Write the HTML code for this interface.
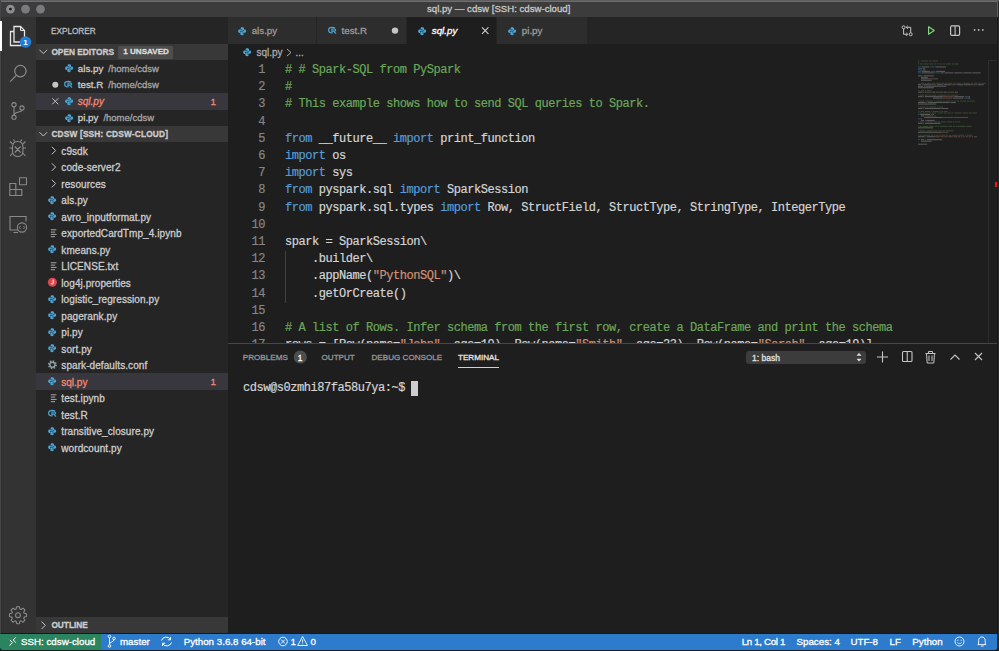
<!DOCTYPE html>
<html><head><meta charset="utf-8">
<style>
*{margin:0;padding:0;box-sizing:border-box}
html,body{width:999px;height:651px;overflow:hidden;background:#1e1e1e;font-family:"Liberation Sans",sans-serif;}
.a{position:absolute}
.t{position:absolute;white-space:nowrap;font-size:9.75px;color:#cccccc;-webkit-text-stroke:0.3px}
.code{position:absolute;font-family:"Liberation Mono",monospace;font-size:12px;letter-spacing:-0.45px;line-height:17.25px;white-space:pre;color:#d4d4d4;-webkit-text-stroke:0.2px}
.cm{color:#6aa65a}.kw{color:#569cd6}.st{color:#ce9178}
svg{position:absolute;overflow:visible}
</style></head><body>

<div class="a" style="left:0;top:0;width:999px;height:17px;background:#3c3c3c"></div>
<div class="a" style="left:0;top:0;width:999px;height:1px;background:#5e5e5e"></div>
<div class="a" style="left:0;top:17px;width:36px;height:617px;background:#333333"></div>
<div class="a" style="left:36px;top:17px;width:192px;height:617px;background:#252526"></div>
<div class="a" style="left:228px;top:17px;width:771px;height:26.5px;background:#252526"></div>
<div class="a" style="left:228px;top:43.5px;width:771px;height:299.5px;background:#1e1e1e"></div>
<div class="a" style="left:228px;top:343px;width:771px;height:291px;background:#1e1e1e;border-top:1px solid #474747"></div>
<div class="a" style="left:0;top:0;width:999px;height:651px;background:transparent"></div>
<div class="a" style="left:0;top:649.5px;width:999px;height:1.5px;background:#1c1c1c"></div>
<div class="a" style="left:0;top:634px;width:998px;height:15.5px;background:#2c7bcd;border-radius:0 0 4px 4px"></div>
<div class="a" style="left:0;top:634px;width:101px;height:15.5px;background:#2a8460;border-radius:0 0 0 4px"></div>
<svg style="left:0;top:0" width="60" height="17"><circle cx="10.45" cy="9.1" r="4.4" fill="#8c8c91"/><circle cx="10.45" cy="9.1" r="1.4" fill="#1a1a1a"/><circle cx="25.5" cy="9.1" r="4.4" fill="#7a7a7e"/><circle cx="40.5" cy="9.1" r="4.4" fill="#7a7a7e"/></svg>
<div class="t" style="left:427px;top:0.7999999999999989px;line-height:16px;font-size:9.65px;color:#c8c8c8;">sql.py — cdsw [SSH: cdsw-cloud]</div>
<svg style="left:0;top:0" width="36" height="634"><path d="M14 26.5H20.5L24.5 30.5V42H14Z" fill="none" stroke="#e6e6e6" stroke-width="1.3"/><path d="M20.5 26.5V30.5H24.5" fill="none" stroke="#e6e6e6" stroke-width="1"/><path d="M14 31.5H10.5V45.5H21V42" fill="none" stroke="#e6e6e6" stroke-width="1.3"/><circle cx="25.5" cy="42" r="5.8" fill="#1f7fd8"/><text x="25.5" y="45" font-size="8" font-weight="bold" fill="#fff" text-anchor="middle" font-family="Liberation Sans">1</text><circle cx="20.4" cy="71.1" r="5.7" fill="none" stroke="#8a8a8a" stroke-width="1.2"/><path d="M16.3 75.4L10.2 81.6" stroke="#8a8a8a" stroke-width="1.3"/><circle cx="14" cy="104.7" r="2.1" fill="none" stroke="#8a8a8a" stroke-width="1.1"/><circle cx="22" cy="108" r="2.1" fill="none" stroke="#8a8a8a" stroke-width="1.1"/><circle cx="14" cy="117.2" r="2.1" fill="none" stroke="#8a8a8a" stroke-width="1.1"/><path d="M14 106.8V115.1M22 110.1C22 112.5 15 111.5 14 114.5" fill="none" stroke="#8a8a8a" stroke-width="1.1"/><path d="M12.5 147C12.5 143.5 14.8 141.5 17.7 141.5C20.6 141.5 22.9 143.5 22.9 147V151.5C22.9 154.5 20.6 156.5 17.7 156.5C14.8 156.5 12.5 154.5 12.5 151.5Z" fill="none" stroke="#8a8a8a" stroke-width="1.1"/><path d="M14.8 146.5L20.6 152.5M20.6 146.5L14.8 152.5M12.5 148H9.5M22.9 148H26M12.5 144L10 141.5M22.9 144L25.4 141.5M12.5 153L10 156M22.9 153L25.4 156M15 141.8L13.5 139.5M20.4 141.8L21.9 139.5" fill="none" stroke="#8a8a8a" stroke-width="1.1"/><path d="M9.8 183.5H15.8V189.5H21.8V195.5H9.8Z M15.8 189.5H9.8 M15.8 189.5V195.5" fill="none" stroke="#8a8a8a" stroke-width="1.1"/><rect x="19.5" y="177.8" width="7" height="7" rx="0.5" fill="none" stroke="#8a8a8a" stroke-width="1.1"/><path d="M18 230H10V216.5H26V221.5" fill="none" stroke="#8a8a8a" stroke-width="1.1"/><path d="M13.5 232.5H18" stroke="#8a8a8a" stroke-width="1.1"/><circle cx="22" cy="227.5" r="4.6" fill="#333" stroke="#8a8a8a" stroke-width="1.1"/><path d="M20.5 226L19.5 227.5L20.5 229M23.5 226L24.5 227.5L23.5 229" fill="none" stroke="#8a8a8a" stroke-width="0.9"/><g transform="translate(18 615.2)"><path d="" /></g></svg>
<svg style="left:0;top:0" width="36" height="651"><path d="M16.63 606.71L19.37 606.71L19.89 609.09L20.99 609.54L23.03 608.23L24.97 610.17L23.66 612.21L24.11 613.31L26.49 613.83L26.49 616.57L24.11 617.09L23.66 618.19L24.97 620.23L23.03 622.17L20.99 620.86L19.89 621.31L19.37 623.69L16.63 623.69L16.11 621.31L15.01 620.86L12.97 622.17L11.03 620.23L12.34 618.19L11.89 617.09L9.51 616.57L9.51 613.83L11.89 613.31L12.34 612.21L11.03 610.17L12.97 608.23L15.01 609.54L16.11 609.09Z" fill="none" stroke="#8a8a8a" stroke-width="1.1" stroke-linejoin="round"/><circle cx="18" cy="615.2" r="2.4" fill="none" stroke="#8a8a8a" stroke-width="1.1"/></svg>
<div class="t" style="left:51px;top:23.900000000000002px;line-height:16px;font-size:8.2px;color:#bbbbbb;">EXPLORER</div>
<div class="a" style="left:36px;top:43.5px;width:192px;height:16.5px;background:#383838"></div>
<svg style="left:0;top:0" width="1" height="1"><path d="M39.5 49.8L43.3 53.6L47.1 49.8" fill="none" stroke="#c5c5c5" stroke-width="1"/></svg>
<div class="t" style="left:51.4px;top:43.7px;line-height:16px;font-size:8.3px;color:#cccccc;font-weight:bold;letter-spacing:0px">OPEN EDITORS</div>
<div class="a" style="left:118px;top:45.5px;width:55px;height:13px;background:#4d4d4d;border-radius:1px"></div>
<div class="t" style="left:123.2px;top:43.7px;line-height:16px;font-size:8.1px;color:#dddddd;font-weight:bold">1 UNSAVED</div>
<svg style="left:64.85px;top:64.1px" width="8.3" height="8.3" viewBox="0 0 10 10"><path d="M5 0.2C3.2 0.2 3.2 1 3.2 1.5V2.5H5.3V3H1.8C0.8 3 0.2 3.8 0.2 5.1C0.2 6.5 0.9 7.1 1.8 7.1H2.6V6C2.6 5.2 3.2 4.6 4 4.6H6C6.7 4.6 7.2 4.1 7.2 3.4V1.5C7.2 0.8 6.5 0.2 5 0.2Z" fill="#4ba5d6"/><path d="M5 9.8C6.8 9.8 6.8 9 6.8 8.5V7.5H4.7V7H8.2C9.2 7 9.8 6.2 9.8 4.9C9.8 3.5 9.1 2.9 8.2 2.9H7.4V4C7.4 4.8 6.8 5.4 6 5.4H4C3.3 5.4 2.8 5.9 2.8 6.6V8.5C2.8 9.2 3.5 9.8 5 9.8Z" fill="#4ba5d6"/></svg>
<div class="t" style="left:77.8px;top:60.849999999999994px;line-height:16px;font-size:9.75px;color:#cccccc;">als.py<span style="font-size:9.5px;color:#a6a6a6;margin-left:5px">/home/cdsw</span></div>
<svg style="left:0;top:0" width="1" height="1"><circle cx="55.3" cy="84.75" r="3" fill="#c5c5c5"/></svg>
<svg style="left:64.4px;top:80.85px" width="9.4" height="7" viewBox="0 0 10 8" preserveAspectRatio="none"><path d="M7.6 1.6C6.9 0.9 5.6 0.5 4.5 0.5C2.3 0.5 0.7 1.8 0.7 3.6C0.7 5.3 2 6.4 3.6 6.7" fill="none" stroke="#4ba5d6" stroke-width="1.3"/><path d="M4.2 7.4V2.3H6.6C7.6 2.3 8.1 2.8 8.1 3.5C8.1 4.2 7.6 4.7 6.6 4.7H4.2M6.1 4.7L8.6 7.6" fill="none" stroke="#4ba5d6" stroke-width="1.2"/></svg>
<div class="t" style="left:77.8px;top:77.35px;line-height:16px;font-size:9.75px;color:#cccccc;">test.R<span style="font-size:9.5px;color:#a6a6a6;margin-left:5px">/home/cdsw</span></div>
<div class="a" style="left:36px;top:93.0px;width:192px;height:16.5px;background:#37373d"></div>
<svg style="left:0;top:0" width="1" height="1"><path d="M52.3 98.25L58.3 104.25M58.3 98.25L52.3 104.25" stroke="#c5c5c5" stroke-width="1"/></svg>
<svg style="left:64.85px;top:97.1px" width="8.3" height="8.3" viewBox="0 0 10 10"><path d="M5 0.2C3.2 0.2 3.2 1 3.2 1.5V2.5H5.3V3H1.8C0.8 3 0.2 3.8 0.2 5.1C0.2 6.5 0.9 7.1 1.8 7.1H2.6V6C2.6 5.2 3.2 4.6 4 4.6H6C6.7 4.6 7.2 4.1 7.2 3.4V1.5C7.2 0.8 6.5 0.2 5 0.2Z" fill="#4ba5d6"/><path d="M5 9.8C6.8 9.8 6.8 9 6.8 8.5V7.5H4.7V7H8.2C9.2 7 9.8 6.2 9.8 4.9C9.8 3.5 9.1 2.9 8.2 2.9H7.4V4C7.4 4.8 6.8 5.4 6 5.4H4C3.3 5.4 2.8 5.9 2.8 6.6V8.5C2.8 9.2 3.5 9.8 5 9.8Z" fill="#4ba5d6"/></svg>
<div class="t" style="left:77.8px;top:93.85px;line-height:16px;font-size:10px;color:#f48771;font-style:italic">sql.py</div>
<div class="t" style="left:210.5px;top:93.85px;line-height:16px;font-size:9.75px;color:#f48771;">1</div>
<svg style="left:64.85px;top:113.6px" width="8.3" height="8.3" viewBox="0 0 10 10"><path d="M5 0.2C3.2 0.2 3.2 1 3.2 1.5V2.5H5.3V3H1.8C0.8 3 0.2 3.8 0.2 5.1C0.2 6.5 0.9 7.1 1.8 7.1H2.6V6C2.6 5.2 3.2 4.6 4 4.6H6C6.7 4.6 7.2 4.1 7.2 3.4V1.5C7.2 0.8 6.5 0.2 5 0.2Z" fill="#4ba5d6"/><path d="M5 9.8C6.8 9.8 6.8 9 6.8 8.5V7.5H4.7V7H8.2C9.2 7 9.8 6.2 9.8 4.9C9.8 3.5 9.1 2.9 8.2 2.9H7.4V4C7.4 4.8 6.8 5.4 6 5.4H4C3.3 5.4 2.8 5.9 2.8 6.6V8.5C2.8 9.2 3.5 9.8 5 9.8Z" fill="#4ba5d6"/></svg>
<div class="t" style="left:77.8px;top:110.35px;line-height:16px;font-size:9.75px;color:#cccccc;">pi.py<span style="font-size:9.5px;color:#a6a6a6;margin-left:5px">/home/cdsw</span></div>
<div class="a" style="left:36px;top:125.9px;width:192px;height:16.5px;background:#383838"></div>
<svg style="left:0;top:0" width="1" height="1"><path d="M39.5 132.20000000000002L43.3 136.0L47.1 132.20000000000002" fill="none" stroke="#c5c5c5" stroke-width="1"/></svg>
<div class="t" style="left:51.4px;top:126.1px;line-height:16px;font-size:8.3px;color:#cccccc;font-weight:bold;letter-spacing:0.18px">CDSW [SSH: CDSW-CLOUD]</div>
<svg style="left:0;top:0" width="1" height="1"><path d="M51.8 146.75L55.6 150.55L51.8 154.35000000000002" fill="none" stroke="#c5c5c5" stroke-width="1"/></svg>
<div class="t" style="left:61.3px;top:143.75px;line-height:16px;font-size:10px;color:#cccccc;letter-spacing:0.08px">c9sdk</div>
<svg style="left:0;top:0" width="1" height="1"><path d="M51.8 163.25L55.6 167.05L51.8 170.85000000000002" fill="none" stroke="#c5c5c5" stroke-width="1"/></svg>
<div class="t" style="left:61.3px;top:160.25px;line-height:16px;font-size:10px;color:#cccccc;letter-spacing:0.08px">code-server2</div>
<svg style="left:0;top:0" width="1" height="1"><path d="M51.8 179.75L55.6 183.55L51.8 187.35000000000002" fill="none" stroke="#c5c5c5" stroke-width="1"/></svg>
<div class="t" style="left:61.3px;top:176.75px;line-height:16px;font-size:10px;color:#cccccc;letter-spacing:0.08px">resources</div>
<svg style="left:48.25px;top:195.9px" width="8.3" height="8.3" viewBox="0 0 10 10"><path d="M5 0.2C3.2 0.2 3.2 1 3.2 1.5V2.5H5.3V3H1.8C0.8 3 0.2 3.8 0.2 5.1C0.2 6.5 0.9 7.1 1.8 7.1H2.6V6C2.6 5.2 3.2 4.6 4 4.6H6C6.7 4.6 7.2 4.1 7.2 3.4V1.5C7.2 0.8 6.5 0.2 5 0.2Z" fill="#4ba5d6"/><path d="M5 9.8C6.8 9.8 6.8 9 6.8 8.5V7.5H4.7V7H8.2C9.2 7 9.8 6.2 9.8 4.9C9.8 3.5 9.1 2.9 8.2 2.9H7.4V4C7.4 4.8 6.8 5.4 6 5.4H4C3.3 5.4 2.8 5.9 2.8 6.6V8.5C2.8 9.2 3.5 9.8 5 9.8Z" fill="#4ba5d6"/></svg>
<div class="t" style="left:61.3px;top:193.25px;line-height:16px;font-size:10px;color:#cccccc;letter-spacing:0.08px">als.py</div>
<svg style="left:48.25px;top:212.4px" width="8.3" height="8.3" viewBox="0 0 10 10"><path d="M5 0.2C3.2 0.2 3.2 1 3.2 1.5V2.5H5.3V3H1.8C0.8 3 0.2 3.8 0.2 5.1C0.2 6.5 0.9 7.1 1.8 7.1H2.6V6C2.6 5.2 3.2 4.6 4 4.6H6C6.7 4.6 7.2 4.1 7.2 3.4V1.5C7.2 0.8 6.5 0.2 5 0.2Z" fill="#4ba5d6"/><path d="M5 9.8C6.8 9.8 6.8 9 6.8 8.5V7.5H4.7V7H8.2C9.2 7 9.8 6.2 9.8 4.9C9.8 3.5 9.1 2.9 8.2 2.9H7.4V4C7.4 4.8 6.8 5.4 6 5.4H4C3.3 5.4 2.8 5.9 2.8 6.6V8.5C2.8 9.2 3.5 9.8 5 9.8Z" fill="#4ba5d6"/></svg>
<div class="t" style="left:61.3px;top:209.75px;line-height:16px;font-size:10px;color:#cccccc;letter-spacing:0.08px">avro_inputformat.py</div>
<svg style="left:47px;top:228.05px" width="10" height="10" viewBox="0 0 10 10"><path d="M3.8 1.8H9.4M3.8 4.1H8.2M3.8 6.4H9.6M3.8 8.7H8" stroke="#a8a8a8" stroke-width="1"/></svg>
<div class="t" style="left:61.3px;top:226.25px;line-height:16px;font-size:10px;color:#cccccc;letter-spacing:0.08px">exportedCardTmp_4.ipynb</div>
<svg style="left:48.25px;top:245.4px" width="8.3" height="8.3" viewBox="0 0 10 10"><path d="M5 0.2C3.2 0.2 3.2 1 3.2 1.5V2.5H5.3V3H1.8C0.8 3 0.2 3.8 0.2 5.1C0.2 6.5 0.9 7.1 1.8 7.1H2.6V6C2.6 5.2 3.2 4.6 4 4.6H6C6.7 4.6 7.2 4.1 7.2 3.4V1.5C7.2 0.8 6.5 0.2 5 0.2Z" fill="#4ba5d6"/><path d="M5 9.8C6.8 9.8 6.8 9 6.8 8.5V7.5H4.7V7H8.2C9.2 7 9.8 6.2 9.8 4.9C9.8 3.5 9.1 2.9 8.2 2.9H7.4V4C7.4 4.8 6.8 5.4 6 5.4H4C3.3 5.4 2.8 5.9 2.8 6.6V8.5C2.8 9.2 3.5 9.8 5 9.8Z" fill="#4ba5d6"/></svg>
<div class="t" style="left:61.3px;top:242.75px;line-height:16px;font-size:10px;color:#cccccc;letter-spacing:0.08px">kmeans.py</div>
<svg style="left:47px;top:261.05px" width="10" height="10" viewBox="0 0 10 10"><path d="M3.8 1.8H9.4M3.8 4.1H8.2M3.8 6.4H9.6M3.8 8.7H8" stroke="#a8a8a8" stroke-width="1"/></svg>
<div class="t" style="left:61.3px;top:259.25000000000006px;line-height:16px;font-size:10px;color:#cccccc;letter-spacing:0.08px">LICENSE.txt</div>
<svg style="left:0;top:0" width="1" height="1"><circle cx="52.4" cy="282.25" r="4.5" fill="#e0464f"/><path d="M53.2 279.65000000000003V283.25C53.2 284.25 51.4 284.25 51 283.25" fill="none" stroke="#fff" stroke-width="1"/></svg>
<div class="t" style="left:61.3px;top:275.75000000000006px;line-height:16px;font-size:10px;color:#cccccc;letter-spacing:0.08px">log4j.properties</div>
<svg style="left:48.25px;top:294.90000000000003px" width="8.3" height="8.3" viewBox="0 0 10 10"><path d="M5 0.2C3.2 0.2 3.2 1 3.2 1.5V2.5H5.3V3H1.8C0.8 3 0.2 3.8 0.2 5.1C0.2 6.5 0.9 7.1 1.8 7.1H2.6V6C2.6 5.2 3.2 4.6 4 4.6H6C6.7 4.6 7.2 4.1 7.2 3.4V1.5C7.2 0.8 6.5 0.2 5 0.2Z" fill="#4ba5d6"/><path d="M5 9.8C6.8 9.8 6.8 9 6.8 8.5V7.5H4.7V7H8.2C9.2 7 9.8 6.2 9.8 4.9C9.8 3.5 9.1 2.9 8.2 2.9H7.4V4C7.4 4.8 6.8 5.4 6 5.4H4C3.3 5.4 2.8 5.9 2.8 6.6V8.5C2.8 9.2 3.5 9.8 5 9.8Z" fill="#4ba5d6"/></svg>
<div class="t" style="left:61.3px;top:292.25000000000006px;line-height:16px;font-size:10px;color:#cccccc;letter-spacing:0.08px">logistic_regression.py</div>
<svg style="left:48.25px;top:311.40000000000003px" width="8.3" height="8.3" viewBox="0 0 10 10"><path d="M5 0.2C3.2 0.2 3.2 1 3.2 1.5V2.5H5.3V3H1.8C0.8 3 0.2 3.8 0.2 5.1C0.2 6.5 0.9 7.1 1.8 7.1H2.6V6C2.6 5.2 3.2 4.6 4 4.6H6C6.7 4.6 7.2 4.1 7.2 3.4V1.5C7.2 0.8 6.5 0.2 5 0.2Z" fill="#4ba5d6"/><path d="M5 9.8C6.8 9.8 6.8 9 6.8 8.5V7.5H4.7V7H8.2C9.2 7 9.8 6.2 9.8 4.9C9.8 3.5 9.1 2.9 8.2 2.9H7.4V4C7.4 4.8 6.8 5.4 6 5.4H4C3.3 5.4 2.8 5.9 2.8 6.6V8.5C2.8 9.2 3.5 9.8 5 9.8Z" fill="#4ba5d6"/></svg>
<div class="t" style="left:61.3px;top:308.75000000000006px;line-height:16px;font-size:10px;color:#cccccc;letter-spacing:0.08px">pagerank.py</div>
<svg style="left:48.25px;top:327.90000000000003px" width="8.3" height="8.3" viewBox="0 0 10 10"><path d="M5 0.2C3.2 0.2 3.2 1 3.2 1.5V2.5H5.3V3H1.8C0.8 3 0.2 3.8 0.2 5.1C0.2 6.5 0.9 7.1 1.8 7.1H2.6V6C2.6 5.2 3.2 4.6 4 4.6H6C6.7 4.6 7.2 4.1 7.2 3.4V1.5C7.2 0.8 6.5 0.2 5 0.2Z" fill="#4ba5d6"/><path d="M5 9.8C6.8 9.8 6.8 9 6.8 8.5V7.5H4.7V7H8.2C9.2 7 9.8 6.2 9.8 4.9C9.8 3.5 9.1 2.9 8.2 2.9H7.4V4C7.4 4.8 6.8 5.4 6 5.4H4C3.3 5.4 2.8 5.9 2.8 6.6V8.5C2.8 9.2 3.5 9.8 5 9.8Z" fill="#4ba5d6"/></svg>
<div class="t" style="left:61.3px;top:325.25000000000006px;line-height:16px;font-size:10px;color:#cccccc;letter-spacing:0.08px">pi.py</div>
<svg style="left:48.25px;top:344.40000000000003px" width="8.3" height="8.3" viewBox="0 0 10 10"><path d="M5 0.2C3.2 0.2 3.2 1 3.2 1.5V2.5H5.3V3H1.8C0.8 3 0.2 3.8 0.2 5.1C0.2 6.5 0.9 7.1 1.8 7.1H2.6V6C2.6 5.2 3.2 4.6 4 4.6H6C6.7 4.6 7.2 4.1 7.2 3.4V1.5C7.2 0.8 6.5 0.2 5 0.2Z" fill="#4ba5d6"/><path d="M5 9.8C6.8 9.8 6.8 9 6.8 8.5V7.5H4.7V7H8.2C9.2 7 9.8 6.2 9.8 4.9C9.8 3.5 9.1 2.9 8.2 2.9H7.4V4C7.4 4.8 6.8 5.4 6 5.4H4C3.3 5.4 2.8 5.9 2.8 6.6V8.5C2.8 9.2 3.5 9.8 5 9.8Z" fill="#4ba5d6"/></svg>
<div class="t" style="left:61.3px;top:341.75000000000006px;line-height:16px;font-size:10px;color:#cccccc;letter-spacing:0.08px">sort.py</div>
<svg style="left:0;top:0" width="1" height="1"><circle cx="52.4" cy="364.7" r="3.5" fill="none" stroke="#8d9ca0" stroke-width="2" stroke-dasharray="1.37 1.37"/><circle cx="52.4" cy="364.7" r="2.5" fill="none" stroke="#8d9ca0" stroke-width="1.4"/></svg>
<div class="t" style="left:61.3px;top:358.25000000000006px;line-height:16px;font-size:10px;color:#cccccc;letter-spacing:0.08px">spark-defaults.conf</div>
<div class="a" style="left:36px;top:373.3px;width:192px;height:16.5px;background:#37373d"></div>
<svg style="left:48.25px;top:377.40000000000003px" width="8.3" height="8.3" viewBox="0 0 10 10"><path d="M5 0.2C3.2 0.2 3.2 1 3.2 1.5V2.5H5.3V3H1.8C0.8 3 0.2 3.8 0.2 5.1C0.2 6.5 0.9 7.1 1.8 7.1H2.6V6C2.6 5.2 3.2 4.6 4 4.6H6C6.7 4.6 7.2 4.1 7.2 3.4V1.5C7.2 0.8 6.5 0.2 5 0.2Z" fill="#4ba5d6"/><path d="M5 9.8C6.8 9.8 6.8 9 6.8 8.5V7.5H4.7V7H8.2C9.2 7 9.8 6.2 9.8 4.9C9.8 3.5 9.1 2.9 8.2 2.9H7.4V4C7.4 4.8 6.8 5.4 6 5.4H4C3.3 5.4 2.8 5.9 2.8 6.6V8.5C2.8 9.2 3.5 9.8 5 9.8Z" fill="#4ba5d6"/></svg>
<div class="t" style="left:61.3px;top:374.75000000000006px;line-height:16px;font-size:10px;color:#f48771;">sql.py</div>
<div class="t" style="left:210.5px;top:374.15000000000003px;line-height:16px;font-size:9.75px;color:#f48771;">1</div>
<svg style="left:47px;top:393.05px" width="10" height="10" viewBox="0 0 10 10"><path d="M3.8 1.8H9.4M3.8 4.1H8.2M3.8 6.4H9.6M3.8 8.7H8" stroke="#a8a8a8" stroke-width="1"/></svg>
<div class="t" style="left:61.3px;top:391.25000000000006px;line-height:16px;font-size:10px;color:#cccccc;letter-spacing:0.08px">test.ipynb</div>
<svg style="left:47.6px;top:410.45000000000005px" width="9.4" height="7" viewBox="0 0 10 8" preserveAspectRatio="none"><path d="M7.6 1.6C6.9 0.9 5.6 0.5 4.5 0.5C2.3 0.5 0.7 1.8 0.7 3.6C0.7 5.3 2 6.4 3.6 6.7" fill="none" stroke="#4ba5d6" stroke-width="1.3"/><path d="M4.2 7.4V2.3H6.6C7.6 2.3 8.1 2.8 8.1 3.5C8.1 4.2 7.6 4.7 6.6 4.7H4.2M6.1 4.7L8.6 7.6" fill="none" stroke="#4ba5d6" stroke-width="1.2"/></svg>
<div class="t" style="left:61.3px;top:407.75000000000006px;line-height:16px;font-size:10px;color:#cccccc;letter-spacing:0.08px">test.R</div>
<svg style="left:48.25px;top:426.90000000000003px" width="8.3" height="8.3" viewBox="0 0 10 10"><path d="M5 0.2C3.2 0.2 3.2 1 3.2 1.5V2.5H5.3V3H1.8C0.8 3 0.2 3.8 0.2 5.1C0.2 6.5 0.9 7.1 1.8 7.1H2.6V6C2.6 5.2 3.2 4.6 4 4.6H6C6.7 4.6 7.2 4.1 7.2 3.4V1.5C7.2 0.8 6.5 0.2 5 0.2Z" fill="#4ba5d6"/><path d="M5 9.8C6.8 9.8 6.8 9 6.8 8.5V7.5H4.7V7H8.2C9.2 7 9.8 6.2 9.8 4.9C9.8 3.5 9.1 2.9 8.2 2.9H7.4V4C7.4 4.8 6.8 5.4 6 5.4H4C3.3 5.4 2.8 5.9 2.8 6.6V8.5C2.8 9.2 3.5 9.8 5 9.8Z" fill="#4ba5d6"/></svg>
<div class="t" style="left:61.3px;top:424.25000000000006px;line-height:16px;font-size:10px;color:#cccccc;letter-spacing:0.08px">transitive_closure.py</div>
<svg style="left:48.25px;top:443.40000000000003px" width="8.3" height="8.3" viewBox="0 0 10 10"><path d="M5 0.2C3.2 0.2 3.2 1 3.2 1.5V2.5H5.3V3H1.8C0.8 3 0.2 3.8 0.2 5.1C0.2 6.5 0.9 7.1 1.8 7.1H2.6V6C2.6 5.2 3.2 4.6 4 4.6H6C6.7 4.6 7.2 4.1 7.2 3.4V1.5C7.2 0.8 6.5 0.2 5 0.2Z" fill="#4ba5d6"/><path d="M5 9.8C6.8 9.8 6.8 9 6.8 8.5V7.5H4.7V7H8.2C9.2 7 9.8 6.2 9.8 4.9C9.8 3.5 9.1 2.9 8.2 2.9H7.4V4C7.4 4.8 6.8 5.4 6 5.4H4C3.3 5.4 2.8 5.9 2.8 6.6V8.5C2.8 9.2 3.5 9.8 5 9.8Z" fill="#4ba5d6"/></svg>
<div class="t" style="left:61.3px;top:440.75000000000006px;line-height:16px;font-size:10px;color:#cccccc;letter-spacing:0.08px">wordcount.py</div>
<div class="a" style="left:36px;top:617px;width:192px;height:16.5px;background:#383838"></div>
<svg style="left:0;top:0" width="1" height="1"><path d="M41.5 621.5L45.3 625.3L41.5 629.1" fill="none" stroke="#c5c5c5" stroke-width="1"/></svg>
<div class="t" style="left:51.4px;top:617.2px;line-height:16px;font-size:8.3px;color:#cccccc;font-weight:bold;letter-spacing:0px">OUTLINE</div>
<div class="a" style="left:228px;top:17px;width:89px;height:26.5px;background:#2d2d2d;border-right:1px solid #252526"></div>
<svg style="left:238.05px;top:26.950000000000003px" width="8.3" height="8.3" viewBox="0 0 10 10"><path d="M5 0.2C3.2 0.2 3.2 1 3.2 1.5V2.5H5.3V3H1.8C0.8 3 0.2 3.8 0.2 5.1C0.2 6.5 0.9 7.1 1.8 7.1H2.6V6C2.6 5.2 3.2 4.6 4 4.6H6C6.7 4.6 7.2 4.1 7.2 3.4V1.5C7.2 0.8 6.5 0.2 5 0.2Z" fill="#4ba5d6"/><path d="M5 9.8C6.8 9.8 6.8 9 6.8 8.5V7.5H4.7V7H8.2C9.2 7 9.8 6.2 9.8 4.9C9.8 3.5 9.1 2.9 8.2 2.9H7.4V4C7.4 4.8 6.8 5.4 6 5.4H4C3.3 5.4 2.8 5.9 2.8 6.6V8.5C2.8 9.2 3.5 9.8 5 9.8Z" fill="#4ba5d6"/></svg>
<div class="t" style="left:251.70000000000002px;top:23.200000000000003px;line-height:16px;font-size:9.75px;color:#9a9a9a;">als.py</div>
<div class="a" style="left:317px;top:17px;width:90px;height:26.5px;background:#2d2d2d;border-right:1px solid #252526"></div>
<svg style="left:328.2px;top:27.200000000000003px" width="9.4" height="7" viewBox="0 0 10 8" preserveAspectRatio="none"><path d="M7.6 1.6C6.9 0.9 5.6 0.5 4.5 0.5C2.3 0.5 0.7 1.8 0.7 3.6C0.7 5.3 2 6.4 3.6 6.7" fill="none" stroke="#4ba5d6" stroke-width="1.3"/><path d="M4.2 7.4V2.3H6.6C7.6 2.3 8.1 2.8 8.1 3.5C8.1 4.2 7.6 4.7 6.6 4.7H4.2M6.1 4.7L8.6 7.6" fill="none" stroke="#4ba5d6" stroke-width="1.2"/></svg>
<div class="t" style="left:341.6px;top:23.200000000000003px;line-height:16px;font-size:9.75px;color:#9a9a9a;">test.R</div>
<svg style="left:0;top:0" width="1" height="1"><circle cx="395" cy="30.6" r="3.2" fill="#c5c5c5"/></svg>
<div class="a" style="left:407px;top:17px;width:90px;height:26.5px;background:#1e1e1e;border-right:1px solid #252526"></div>
<svg style="left:418.15000000000003px;top:26.950000000000003px" width="8.3" height="8.3" viewBox="0 0 10 10"><path d="M5 0.2C3.2 0.2 3.2 1 3.2 1.5V2.5H5.3V3H1.8C0.8 3 0.2 3.8 0.2 5.1C0.2 6.5 0.9 7.1 1.8 7.1H2.6V6C2.6 5.2 3.2 4.6 4 4.6H6C6.7 4.6 7.2 4.1 7.2 3.4V1.5C7.2 0.8 6.5 0.2 5 0.2Z" fill="#4ba5d6"/><path d="M5 9.8C6.8 9.8 6.8 9 6.8 8.5V7.5H4.7V7H8.2C9.2 7 9.8 6.2 9.8 4.9C9.8 3.5 9.1 2.9 8.2 2.9H7.4V4C7.4 4.8 6.8 5.4 6 5.4H4C3.3 5.4 2.8 5.9 2.8 6.6V8.5C2.8 9.2 3.5 9.8 5 9.8Z" fill="#4ba5d6"/></svg>
<div class="t" style="left:431.8px;top:23.200000000000003px;line-height:16px;font-size:9.75px;color:#ffffff;font-style:italic">sql.py</div>
<svg style="left:0;top:0" width="1" height="1"><path d="M482 27.400000000000002L488.4 33.800000000000004M488.4 27.400000000000002L482 33.800000000000004" stroke="#d0d0d0" stroke-width="1.1"/></svg>
<div class="a" style="left:497px;top:17px;width:90.5px;height:26.5px;background:#2d2d2d;border-right:1px solid #252526"></div>
<svg style="left:508.15px;top:26.950000000000003px" width="8.3" height="8.3" viewBox="0 0 10 10"><path d="M5 0.2C3.2 0.2 3.2 1 3.2 1.5V2.5H5.3V3H1.8C0.8 3 0.2 3.8 0.2 5.1C0.2 6.5 0.9 7.1 1.8 7.1H2.6V6C2.6 5.2 3.2 4.6 4 4.6H6C6.7 4.6 7.2 4.1 7.2 3.4V1.5C7.2 0.8 6.5 0.2 5 0.2Z" fill="#4ba5d6"/><path d="M5 9.8C6.8 9.8 6.8 9 6.8 8.5V7.5H4.7V7H8.2C9.2 7 9.8 6.2 9.8 4.9C9.8 3.5 9.1 2.9 8.2 2.9H7.4V4C7.4 4.8 6.8 5.4 6 5.4H4C3.3 5.4 2.8 5.9 2.8 6.6V8.5C2.8 9.2 3.5 9.8 5 9.8Z" fill="#4ba5d6"/></svg>
<div class="t" style="left:521.8px;top:23.200000000000003px;line-height:16px;font-size:9.75px;color:#9a9a9a;">pi.py</div>
<svg style="left:0;top:0" width="1" height="1"><circle cx="903.6" cy="27.3" r="1.5" fill="none" stroke="#c5c5c5" stroke-width="1"/><circle cx="910.7" cy="34.3" r="1.5" fill="none" stroke="#c5c5c5" stroke-width="1"/><path d="M903.6 28.8V34.3H907.3M910.7 32.8V27.3H907" fill="none" stroke="#c5c5c5" stroke-width="1"/><path d="M906.2 32.8L907.9 34.3L906.2 35.8M907.8 25.8L906.1 27.3L907.8 28.8" fill="none" stroke="#c5c5c5" stroke-width="1"/><path d="M928.6 26.8V34.3L934.2 30.55Z" fill="none" stroke="#89d185" stroke-width="1.2" stroke-linejoin="round"/><rect x="950.6" y="25.9" width="9" height="9.4" rx="1.3" fill="none" stroke="#c5c5c5" stroke-width="1.2"/><path d="M955.1 25.9V35.3" stroke="#c5c5c5" stroke-width="1.1"/><circle cx="974.6" cy="29.9" r="0.85" fill="#c5c5c5"/><circle cx="978.7" cy="29.9" r="0.85" fill="#c5c5c5"/><circle cx="982.8" cy="29.9" r="0.85" fill="#c5c5c5"/></svg>
<svg style="left:242.65px;top:47.65px" width="8.3" height="8.3" viewBox="0 0 10 10"><path d="M5 0.2C3.2 0.2 3.2 1 3.2 1.5V2.5H5.3V3H1.8C0.8 3 0.2 3.8 0.2 5.1C0.2 6.5 0.9 7.1 1.8 7.1H2.6V6C2.6 5.2 3.2 4.6 4 4.6H6C6.7 4.6 7.2 4.1 7.2 3.4V1.5C7.2 0.8 6.5 0.2 5 0.2Z" fill="#4ba5d6"/><path d="M5 9.8C6.8 9.8 6.8 9 6.8 8.5V7.5H4.7V7H8.2C9.2 7 9.8 6.2 9.8 4.9C9.8 3.5 9.1 2.9 8.2 2.9H7.4V4C7.4 4.8 6.8 5.4 6 5.4H4C3.3 5.4 2.8 5.9 2.8 6.6V8.5C2.8 9.2 3.5 9.8 5 9.8Z" fill="#4ba5d6"/></svg>
<div class="t" style="left:256.5px;top:45.300000000000004px;line-height:16px;font-size:10px;color:#a9a9a9;">sql.py</div>
<svg style="left:0;top:0" width="1" height="1"><path d="M287 49L291 52.5L287 56" fill="none" stroke="#a9a9a9" stroke-width="1"/></svg>
<div class="t" style="left:295.5px;top:45.300000000000004px;line-height:16px;font-size:9.75px;color:#a9a9a9;">...</div>
<div class="a" style="left:228px;top:43.5px;width:771px;height:299.5px;overflow:hidden">
<div class="code" style="left:0;top:18.5px;width:37px;text-align:right;color:#858585">1</div>
<div class="code" style="left:57px;top:18.5px"><span class="cm"># # Spark-SQL from PySpark</span></div>
<div class="code" style="left:0;top:35.7px;width:37px;text-align:right;color:#858585">2</div>
<div class="code" style="left:57px;top:35.7px"><span class="cm">#</span></div>
<div class="code" style="left:0;top:52.900000000000006px;width:37px;text-align:right;color:#858585">3</div>
<div class="code" style="left:57px;top:52.900000000000006px"><span class="cm"># This example shows how to send SQL queries to Spark.</span></div>
<div class="code" style="left:0;top:70.1px;width:37px;text-align:right;color:#858585">4</div>
<div class="code" style="left:57px;top:70.1px"></div>
<div class="code" style="left:0;top:87.30000000000001px;width:37px;text-align:right;color:#858585">5</div>
<div class="code" style="left:57px;top:87.30000000000001px"><span class="kw">from</span> __future__ <span class="kw">import</span> print_function</div>
<div class="code" style="left:0;top:104.5px;width:37px;text-align:right;color:#858585">6</div>
<div class="code" style="left:57px;top:104.5px"><span class="kw">import</span> os</div>
<div class="code" style="left:0;top:121.69999999999999px;width:37px;text-align:right;color:#858585">7</div>
<div class="code" style="left:57px;top:121.69999999999999px"><span class="kw">import</span> sys</div>
<div class="code" style="left:0;top:138.89999999999998px;width:37px;text-align:right;color:#858585">8</div>
<div class="code" style="left:57px;top:138.89999999999998px"><span class="kw">from</span> pyspark.sql <span class="kw">import</span> SparkSession</div>
<div class="code" style="left:0;top:156.1px;width:37px;text-align:right;color:#858585">9</div>
<div class="code" style="left:57px;top:156.1px"><span class="kw">from</span> pyspark.sql.types <span class="kw">import</span> Row, StructField, StructType, StringType, IntegerType</div>
<div class="code" style="left:0;top:173.29999999999998px;width:37px;text-align:right;color:#858585">10</div>
<div class="code" style="left:57px;top:173.29999999999998px"></div>
<div class="code" style="left:0;top:190.5px;width:37px;text-align:right;color:#858585">11</div>
<div class="code" style="left:57px;top:190.5px">spark = SparkSession\</div>
<div class="code" style="left:0;top:207.7px;width:37px;text-align:right;color:#858585">12</div>
<div class="code" style="left:57px;top:207.7px">    .builder\</div>
<div class="code" style="left:0;top:224.89999999999998px;width:37px;text-align:right;color:#858585">13</div>
<div class="code" style="left:57px;top:224.89999999999998px">    .appName(<span class="st">&quot;PythonSQL&quot;</span>)\</div>
<div class="code" style="left:0;top:242.10000000000002px;width:37px;text-align:right;color:#858585">14</div>
<div class="code" style="left:57px;top:242.10000000000002px">    .getOrCreate()</div>
<div class="code" style="left:0;top:259.29999999999995px;width:37px;text-align:right;color:#858585">15</div>
<div class="code" style="left:57px;top:259.29999999999995px"></div>
<div class="code" style="left:0;top:276.5px;width:37px;text-align:right;color:#858585">16</div>
<div class="code" style="left:57px;top:276.5px"><span class="cm"># A list of Rows. Infer schema from the first row, create a DataFrame and print the schema</span></div>
<div class="code" style="left:0;top:293.7px;width:37px;text-align:right;color:#858585">17</div>
<div class="code" style="left:57px;top:293.7px">rows = [Row(name=<span class="st">&quot;John&quot;</span>, age=19), Row(name=<span class="st">&quot;Smith&quot;</span>, age=23), Row(name=<span class="st">&quot;Sarah&quot;</span>, age=19)]</div>
<div class="a" style="left:57px;top:207.7px;width:1px;height:51.599999999999994px;background:#404040"></div>
</div>
<div class="t" style="left:242.8px;top:349.6px;line-height:16px;font-size:8.1px;color:#969696;">PROBLEMS</div>
<div class="t" style="left:321.5px;top:349.6px;line-height:16px;font-size:8.1px;color:#969696;">OUTPUT</div>
<div class="t" style="left:371.5px;top:349.6px;line-height:16px;font-size:8.1px;color:#969696;">DEBUG CONSOLE</div>
<div class="t" style="left:458px;top:349.6px;line-height:16px;font-size:8.1px;color:#e7e7e7;">TERMINAL</div>
<div class="a" style="left:457.7px;top:366.8px;width:41.3px;height:1px;background:#d0d0d0"></div>
<svg style="left:0;top:0" width="1" height="1"><circle cx="300.3" cy="357" r="6.6" fill="#4d4d4d"/></svg>
<div class="t" style="left:297.8px;top:349.8px;line-height:16px;font-size:8.3px;color:#ffffff;">1</div>
<div class="a" style="left:745.5px;top:350.5px;width:120px;height:13.5px;background:#3c3c3c;border-radius:3px"></div>
<div class="t" style="left:752px;top:350.1px;line-height:16px;font-size:8.5px;color:#e0e0e0;">1: bash</div>
<svg style="left:0;top:0" width="1" height="1"><path d="M857 355.5L859 353.3L861 355.5Z M857 359L859 361.2L861 359Z" fill="#e0e0e0" stroke="#e0e0e0" stroke-width="0.5"/></svg>
<svg style="left:0;top:0" width="1" height="1"><path d="M882.5 351.5V362.5M877 357H888" stroke="#c5c5c5" stroke-width="1.1"/><rect x="902.5" y="351.5" width="9.5" height="10" rx="1" fill="none" stroke="#c5c5c5" stroke-width="1.1"/><path d="M907.25 351.5V361.5" stroke="#c5c5c5" stroke-width="1.1"/><path d="M925.5 353.5H935.5M928.5 353.5V351.5H932.5V353.5M926.5 353.5L927.2 363H933.8L934.5 353.5M929 355.5V361M932 355.5V361" fill="none" stroke="#c5c5c5" stroke-width="1"/><path d="M950.5 359.5L955 355L959.5 359.5" fill="none" stroke="#c5c5c5" stroke-width="1.1"/><path d="M975 353L982 360M982 353L975 360" stroke="#c5c5c5" stroke-width="1.1"/></svg>
<div class="code" style="left:243px;top:380.2px;color:#d4d4d4">cdsw@s0zmhi87fa58u7ya:~$ </div>
<div class="a" style="left:411px;top:380.7px;width:7px;height:15.6px;background:#cdcdcd"></div>
<svg style="left:0;top:0" width="1" height="1"><path d="M9.8 639.9L12.4 642.4L9.6 645.6M15.8 637.3L13.3 639.9L15.8 642.7" fill="none" stroke="#ffffff" stroke-width="1"/></svg>
<div class="t" style="left:21px;top:633.5px;line-height:16px;font-size:9.75px;color:#ffffff;">SSH: cdsw-cloud</div>
<svg style="left:0;top:-0.8px" width="1" height="1"><circle cx="109.5" cy="637.5" r="1.3" fill="none" stroke="#ffffff" stroke-width="0.9"/><circle cx="109.5" cy="647" r="1.3" fill="none" stroke="#ffffff" stroke-width="0.9"/><circle cx="114" cy="639.5" r="1.3" fill="none" stroke="#ffffff" stroke-width="0.9"/><path d="M109.5 638.8V645.7M114 640.8C114 643 110 642.5 109.5 645" fill="none" stroke="#ffffff" stroke-width="0.9"/></svg>
<div class="t" style="left:120px;top:633.5px;line-height:16px;font-size:9.75px;color:#ffffff;">master</div>
<svg style="left:0;top:-0.8px" width="1" height="1"><path d="M161.5 641.5A5 5 0 0 1 170.5 640.5M171.5 643.5A5 5 0 0 1 162.5 644.5" fill="none" stroke="#ffffff" stroke-width="1"/><path d="M170.5 638V640.8H167.8M162.5 647V644.2H165.2" fill="none" stroke="#ffffff" stroke-width="1"/></svg>
<div class="t" style="left:183.7px;top:633.5px;line-height:16px;font-size:9.75px;color:#ffffff;">Python 3.6.8 64-bit</div>
<svg style="left:0;top:-0.8px" width="1" height="1"><circle cx="283" cy="642.5" r="4.3" fill="none" stroke="#ffffff" stroke-width="0.9"/><path d="M281 640.5L285 644.5M285 640.5L281 644.5" stroke="#ffffff" stroke-width="0.9"/><path d="M302.6 637.5L307.5 646.5H297.7Z M302.6 640.5V643.5M302.6 644.5V645.3" fill="none" stroke="#ffffff" stroke-width="0.9"/></svg>
<div class="t" style="left:290.5px;top:633.5px;line-height:16px;font-size:9.75px;color:#ffffff;">1</div>
<div class="t" style="left:310.5px;top:633.5px;line-height:16px;font-size:9.75px;color:#ffffff;">0</div>
<div class="t" style="left:741.8px;top:633.5px;line-height:16px;font-size:9.75px;color:#ffffff;letter-spacing:-0.35px">Ln 1, Col 1</div>
<div class="t" style="left:796.5px;top:633.5px;line-height:16px;font-size:9.75px;color:#ffffff;">Spaces: 4</div>
<div class="t" style="left:850.4px;top:633.5px;line-height:16px;font-size:9.75px;color:#ffffff;">UTF-8</div>
<div class="t" style="left:889.5px;top:633.5px;line-height:16px;font-size:9.75px;color:#ffffff;">LF</div>
<div class="t" style="left:912.3px;top:633.5px;line-height:16px;font-size:9.75px;color:#ffffff;">Python</div>
<svg style="left:0;top:0" width="1" height="1"><circle cx="959.5" cy="641.5" r="4.5" fill="none" stroke="#ffffff" stroke-width="0.9"/><path d="M957.8 639.6V641M961.2 639.6V641" stroke="#ffffff" stroke-width="0.8"/><path d="M957.3 642.5C958.3 644 960.7 644 961.7 642.5" fill="none" stroke="#ffffff" stroke-width="0.8"/><path d="M977.6 644.6H986.2M978.6 644.6V640.5C978.6 635.8 985.2 635.8 985.2 640.5V644.6M981 646H983.6" fill="none" stroke="#ffffff" stroke-width="0.9"/></svg>
<svg style="left:0;top:0" width="1" height="1"><g opacity="0.34"><rect x="918.00" y="60.50" width="0.76" height="1" fill="#6a9955"/><rect x="919.51" y="60.50" width="0.76" height="1" fill="#6a9955"/><rect x="921.02" y="60.50" width="6.79" height="1" fill="#6a9955"/><rect x="928.57" y="60.50" width="3.02" height="1" fill="#6a9955"/><rect x="932.35" y="60.50" width="5.29" height="1" fill="#6a9955"/><rect x="918.00" y="61.98" width="0.76" height="1" fill="#6a9955"/><rect x="918.00" y="63.47" width="0.76" height="1" fill="#6a9955"/><rect x="919.51" y="63.47" width="3.02" height="1" fill="#6a9955"/><rect x="923.28" y="63.47" width="5.29" height="1" fill="#6a9955"/><rect x="929.33" y="63.47" width="3.77" height="1" fill="#6a9955"/><rect x="933.86" y="63.47" width="2.27" height="1" fill="#6a9955"/><rect x="936.88" y="63.47" width="1.51" height="1" fill="#6a9955"/><rect x="939.14" y="63.47" width="3.02" height="1" fill="#6a9955"/><rect x="942.91" y="63.47" width="2.27" height="1" fill="#6a9955"/><rect x="945.93" y="63.47" width="5.29" height="1" fill="#6a9955"/><rect x="951.98" y="63.47" width="1.51" height="1" fill="#6a9955"/><rect x="954.24" y="63.47" width="4.53" height="1" fill="#6a9955"/><rect x="918.00" y="66.44" width="3.02" height="1" fill="#569cd6"/><rect x="921.77" y="66.44" width="7.55" height="1" fill="#d4d4d4"/><rect x="930.08" y="66.44" width="4.53" height="1" fill="#569cd6"/><rect x="935.37" y="66.44" width="10.57" height="1" fill="#d4d4d4"/><rect x="918.00" y="67.92" width="4.53" height="1" fill="#569cd6"/><rect x="923.28" y="67.92" width="1.51" height="1" fill="#d4d4d4"/><rect x="918.00" y="69.41" width="4.53" height="1" fill="#569cd6"/><rect x="923.28" y="69.41" width="2.27" height="1" fill="#d4d4d4"/><rect x="918.00" y="70.89" width="3.02" height="1" fill="#569cd6"/><rect x="921.77" y="70.89" width="8.30" height="1" fill="#d4d4d4"/><rect x="930.84" y="70.89" width="4.53" height="1" fill="#569cd6"/><rect x="936.12" y="70.89" width="9.06" height="1" fill="#d4d4d4"/><rect x="918.00" y="72.38" width="3.02" height="1" fill="#569cd6"/><rect x="921.77" y="72.38" width="12.84" height="1" fill="#d4d4d4"/><rect x="935.37" y="72.38" width="4.53" height="1" fill="#569cd6"/><rect x="940.65" y="72.38" width="3.02" height="1" fill="#d4d4d4"/><rect x="944.42" y="72.38" width="9.06" height="1" fill="#d4d4d4"/><rect x="954.24" y="72.38" width="8.30" height="1" fill="#d4d4d4"/><rect x="963.30" y="72.38" width="8.30" height="1" fill="#d4d4d4"/><rect x="972.36" y="72.38" width="8.30" height="1" fill="#d4d4d4"/><rect x="918.00" y="75.35" width="3.77" height="1" fill="#d4d4d4"/><rect x="922.53" y="75.35" width="0.76" height="1" fill="#d4d4d4"/><rect x="924.04" y="75.35" width="9.81" height="1" fill="#d4d4d4"/><rect x="921.02" y="76.84" width="6.79" height="1" fill="#d4d4d4"/><rect x="921.02" y="78.32" width="6.79" height="1" fill="#d4d4d4"/><rect x="927.82" y="78.32" width="8.30" height="1" fill="#ce9178"/><rect x="936.12" y="78.32" width="1.51" height="1" fill="#d4d4d4"/><rect x="921.02" y="79.81" width="10.57" height="1" fill="#d4d4d4"/><rect x="918.00" y="82.78" width="0.76" height="1" fill="#6a9955"/><rect x="919.51" y="82.78" width="0.76" height="1" fill="#6a9955"/><rect x="921.02" y="82.78" width="3.02" height="1" fill="#6a9955"/><rect x="924.79" y="82.78" width="1.51" height="1" fill="#6a9955"/><rect x="927.06" y="82.78" width="3.77" height="1" fill="#6a9955"/><rect x="931.59" y="82.78" width="3.77" height="1" fill="#6a9955"/><rect x="936.12" y="82.78" width="4.53" height="1" fill="#6a9955"/><rect x="941.40" y="82.78" width="3.02" height="1" fill="#6a9955"/><rect x="945.18" y="82.78" width="2.27" height="1" fill="#6a9955"/><rect x="948.20" y="82.78" width="3.77" height="1" fill="#6a9955"/><rect x="952.73" y="82.78" width="3.02" height="1" fill="#6a9955"/><rect x="956.50" y="82.78" width="4.53" height="1" fill="#6a9955"/><rect x="961.79" y="82.78" width="0.76" height="1" fill="#6a9955"/><rect x="963.30" y="82.78" width="6.79" height="1" fill="#6a9955"/><rect x="970.85" y="82.78" width="2.27" height="1" fill="#6a9955"/><rect x="973.87" y="82.78" width="3.77" height="1" fill="#6a9955"/><rect x="978.40" y="82.78" width="2.27" height="1" fill="#6a9955"/><rect x="981.42" y="82.78" width="4.53" height="1" fill="#6a9955"/><rect x="918.00" y="84.26" width="3.02" height="1" fill="#d4d4d4"/><rect x="921.77" y="84.26" width="0.76" height="1" fill="#d4d4d4"/><rect x="923.28" y="84.26" width="7.55" height="1" fill="#d4d4d4"/><rect x="930.84" y="84.26" width="4.53" height="1" fill="#ce9178"/><rect x="935.37" y="84.26" width="0.76" height="1" fill="#d4d4d4"/><rect x="936.88" y="84.26" width="6.04" height="1" fill="#d4d4d4"/><rect x="943.67" y="84.26" width="6.79" height="1" fill="#d4d4d4"/><rect x="950.47" y="84.26" width="5.29" height="1" fill="#ce9178"/><rect x="955.75" y="84.26" width="0.76" height="1" fill="#d4d4d4"/><rect x="957.26" y="84.26" width="6.04" height="1" fill="#d4d4d4"/><rect x="964.05" y="84.26" width="6.79" height="1" fill="#d4d4d4"/><rect x="970.85" y="84.26" width="5.29" height="1" fill="#ce9178"/><rect x="976.13" y="84.26" width="0.76" height="1" fill="#d4d4d4"/><rect x="977.64" y="84.26" width="6.04" height="1" fill="#d4d4d4"/><rect x="918.00" y="85.75" width="5.29" height="1" fill="#d4d4d4"/><rect x="924.04" y="85.75" width="0.76" height="1" fill="#d4d4d4"/><rect x="925.55" y="85.75" width="20.39" height="1" fill="#d4d4d4"/><rect x="918.00" y="87.23" width="15.86" height="1" fill="#d4d4d4"/><rect x="918.00" y="90.20" width="0.76" height="1" fill="#6a9955"/><rect x="919.51" y="90.20" width="0.76" height="1" fill="#6a9955"/><rect x="921.02" y="90.20" width="3.02" height="1" fill="#6a9955"/><rect x="924.79" y="90.20" width="1.51" height="1" fill="#6a9955"/><rect x="927.06" y="90.20" width="4.53" height="1" fill="#6a9955"/><rect x="918.00" y="91.69" width="4.53" height="1" fill="#d4d4d4"/><rect x="923.28" y="91.69" width="0.76" height="1" fill="#d4d4d4"/><rect x="924.79" y="91.69" width="1.51" height="1" fill="#d4d4d4"/><rect x="926.30" y="91.69" width="4.53" height="1" fill="#ce9178"/><rect x="930.84" y="91.69" width="0.76" height="1" fill="#d4d4d4"/><rect x="932.35" y="91.69" width="3.02" height="1" fill="#d4d4d4"/><rect x="936.12" y="91.69" width="0.76" height="1" fill="#d4d4d4"/><rect x="936.88" y="91.69" width="5.29" height="1" fill="#ce9178"/><rect x="942.16" y="91.69" width="0.76" height="1" fill="#d4d4d4"/><rect x="943.67" y="91.69" width="3.02" height="1" fill="#d4d4d4"/><rect x="947.45" y="91.69" width="0.76" height="1" fill="#d4d4d4"/><rect x="948.20" y="91.69" width="5.29" height="1" fill="#ce9178"/><rect x="953.49" y="91.69" width="0.76" height="1" fill="#d4d4d4"/><rect x="955.00" y="91.69" width="3.02" height="1" fill="#d4d4d4"/><rect x="918.00" y="94.66" width="0.76" height="1" fill="#6a9955"/><rect x="919.51" y="94.66" width="4.53" height="1" fill="#6a9955"/><rect x="924.79" y="94.66" width="3.02" height="1" fill="#6a9955"/><rect x="928.57" y="94.66" width="2.27" height="1" fill="#6a9955"/><rect x="931.59" y="94.66" width="4.53" height="1" fill="#6a9955"/><rect x="936.88" y="94.66" width="0.76" height="1" fill="#6a9955"/><rect x="938.38" y="94.66" width="8.30" height="1" fill="#6a9955"/><rect x="947.45" y="94.66" width="2.27" height="1" fill="#6a9955"/><rect x="950.47" y="94.66" width="7.55" height="1" fill="#6a9955"/><rect x="918.00" y="96.14" width="4.53" height="1" fill="#d4d4d4"/><rect x="923.28" y="96.14" width="0.76" height="1" fill="#d4d4d4"/><rect x="924.79" y="96.14" width="18.12" height="1" fill="#d4d4d4"/><rect x="942.91" y="96.14" width="9.81" height="1" fill="#ce9178"/><rect x="952.73" y="96.14" width="0.76" height="1" fill="#d4d4d4"/><rect x="954.24" y="96.14" width="9.81" height="1" fill="#d4d4d4"/><rect x="964.81" y="96.14" width="3.77" height="1" fill="#569cd6"/><rect x="968.59" y="96.14" width="1.51" height="1" fill="#d4d4d4"/><rect x="933.10" y="97.62" width="9.06" height="1" fill="#d4d4d4"/><rect x="942.16" y="97.62" width="9.06" height="1" fill="#ce9178"/><rect x="951.22" y="97.62" width="0.76" height="1" fill="#d4d4d4"/><rect x="952.73" y="97.62" width="10.57" height="1" fill="#d4d4d4"/><rect x="964.05" y="97.62" width="3.77" height="1" fill="#569cd6"/><rect x="967.83" y="97.62" width="2.27" height="1" fill="#d4d4d4"/><rect x="918.00" y="100.59" width="0.76" height="1" fill="#6a9955"/><rect x="919.51" y="100.59" width="4.53" height="1" fill="#6a9955"/><rect x="924.79" y="100.59" width="0.76" height="1" fill="#6a9955"/><rect x="926.30" y="100.59" width="6.79" height="1" fill="#6a9955"/><rect x="933.86" y="100.59" width="1.51" height="1" fill="#6a9955"/><rect x="936.12" y="100.59" width="6.04" height="1" fill="#6a9955"/><rect x="942.91" y="100.59" width="2.27" height="1" fill="#6a9955"/><rect x="945.93" y="100.59" width="4.53" height="1" fill="#6a9955"/><rect x="951.22" y="100.59" width="1.51" height="1" fill="#6a9955"/><rect x="953.49" y="100.59" width="2.27" height="1" fill="#6a9955"/><rect x="956.50" y="100.59" width="2.27" height="1" fill="#6a9955"/><rect x="959.52" y="100.59" width="2.27" height="1" fill="#6a9955"/><rect x="962.54" y="100.59" width="3.77" height="1" fill="#6a9955"/><rect x="967.08" y="100.59" width="2.27" height="1" fill="#6a9955"/><rect x="970.10" y="100.59" width="4.53" height="1" fill="#6a9955"/><rect x="918.00" y="102.08" width="7.55" height="1" fill="#d4d4d4"/><rect x="926.30" y="102.08" width="0.76" height="1" fill="#d4d4d4"/><rect x="927.82" y="102.08" width="21.89" height="1" fill="#d4d4d4"/><rect x="950.47" y="102.08" width="5.29" height="1" fill="#d4d4d4"/><rect x="918.00" y="103.56" width="18.12" height="1" fill="#d4d4d4"/><rect x="918.00" y="106.53" width="0.76" height="1" fill="#6a9955"/><rect x="919.51" y="106.53" width="6.04" height="1" fill="#6a9955"/><rect x="926.30" y="106.53" width="2.27" height="1" fill="#6a9955"/><rect x="929.33" y="106.53" width="6.79" height="1" fill="#6a9955"/><rect x="936.88" y="106.53" width="1.51" height="1" fill="#6a9955"/><rect x="939.14" y="106.53" width="3.77" height="1" fill="#6a9955"/><rect x="918.00" y="108.02" width="4.53" height="1" fill="#d4d4d4"/><rect x="923.28" y="108.02" width="0.76" height="1" fill="#d4d4d4"/><rect x="924.79" y="108.02" width="15.86" height="1" fill="#d4d4d4"/><rect x="941.40" y="108.02" width="6.79" height="1" fill="#d4d4d4"/><rect x="918.00" y="110.99" width="0.76" height="1" fill="#6a9955"/><rect x="919.51" y="110.99" width="0.76" height="1" fill="#6a9955"/><rect x="921.02" y="110.99" width="3.02" height="1" fill="#6a9955"/><rect x="924.79" y="110.99" width="5.29" height="1" fill="#6a9955"/><rect x="930.84" y="110.99" width="1.51" height="1" fill="#6a9955"/><rect x="933.10" y="110.99" width="5.29" height="1" fill="#6a9955"/><rect x="939.14" y="110.99" width="1.51" height="1" fill="#6a9955"/><rect x="941.40" y="110.99" width="1.51" height="1" fill="#6a9955"/><rect x="943.67" y="110.99" width="3.77" height="1" fill="#6a9955"/><rect x="918.00" y="112.47" width="0.76" height="1" fill="#6a9955"/><rect x="919.51" y="112.47" width="2.27" height="1" fill="#6a9955"/><rect x="922.53" y="112.47" width="3.02" height="1" fill="#6a9955"/><rect x="926.30" y="112.47" width="2.27" height="1" fill="#6a9955"/><rect x="929.33" y="112.47" width="1.51" height="1" fill="#6a9955"/><rect x="931.59" y="112.47" width="4.53" height="1" fill="#6a9955"/><rect x="936.88" y="112.47" width="0.76" height="1" fill="#6a9955"/><rect x="938.38" y="112.47" width="4.53" height="1" fill="#6a9955"/><rect x="943.67" y="112.47" width="3.02" height="1" fill="#6a9955"/><rect x="947.45" y="112.47" width="3.02" height="1" fill="#6a9955"/><rect x="951.22" y="112.47" width="1.51" height="1" fill="#6a9955"/><rect x="953.49" y="112.47" width="0.76" height="1" fill="#6a9955"/><rect x="955.00" y="112.47" width="6.79" height="1" fill="#6a9955"/><rect x="962.54" y="112.47" width="5.29" height="1" fill="#6a9955"/><rect x="968.59" y="112.47" width="3.02" height="1" fill="#6a9955"/><rect x="972.36" y="112.47" width="4.53" height="1" fill="#6a9955"/><rect x="918.00" y="113.96" width="1.51" height="1" fill="#569cd6"/><rect x="920.26" y="113.96" width="9.81" height="1" fill="#d4d4d4"/><rect x="930.84" y="113.96" width="0.76" height="1" fill="#d4d4d4"/><rect x="932.35" y="113.96" width="1.51" height="1" fill="#d4d4d4"/><rect x="921.02" y="115.44" width="3.02" height="1" fill="#d4d4d4"/><rect x="924.79" y="115.44" width="0.76" height="1" fill="#d4d4d4"/><rect x="926.30" y="115.44" width="6.79" height="1" fill="#ce9178"/><rect x="933.86" y="115.44" width="0.76" height="1" fill="#d4d4d4"/><rect x="935.37" y="115.44" width="0.76" height="1" fill="#d4d4d4"/><rect x="924.04" y="116.93" width="18.12" height="1" fill="#d4d4d4"/><rect x="942.16" y="116.93" width="9.06" height="1" fill="#ce9178"/><rect x="951.22" y="116.93" width="1.51" height="1" fill="#d4d4d4"/><rect x="953.49" y="116.93" width="13.59" height="1" fill="#ce9178"/><rect x="967.08" y="116.93" width="0.76" height="1" fill="#d4d4d4"/><rect x="918.00" y="118.42" width="3.02" height="1" fill="#569cd6"/><rect x="921.02" y="118.42" width="0.76" height="1" fill="#d4d4d4"/><rect x="921.02" y="119.90" width="3.02" height="1" fill="#d4d4d4"/><rect x="924.79" y="119.90" width="0.76" height="1" fill="#d4d4d4"/><rect x="926.30" y="119.90" width="8.30" height="1" fill="#d4d4d4"/><rect x="918.00" y="121.39" width="0.76" height="1" fill="#6a9955"/><rect x="919.51" y="121.39" width="4.53" height="1" fill="#6a9955"/><rect x="924.79" y="121.39" width="0.76" height="1" fill="#6a9955"/><rect x="926.30" y="121.39" width="6.79" height="1" fill="#6a9955"/><rect x="933.86" y="121.39" width="3.02" height="1" fill="#6a9955"/><rect x="937.63" y="121.39" width="2.27" height="1" fill="#6a9955"/><rect x="940.65" y="121.39" width="5.29" height="1" fill="#6a9955"/><rect x="946.69" y="121.39" width="5.29" height="1" fill="#6a9955"/><rect x="952.73" y="121.39" width="1.51" height="1" fill="#6a9955"/><rect x="955.00" y="121.39" width="1.51" height="1" fill="#6a9955"/><rect x="957.26" y="121.39" width="3.02" height="1" fill="#6a9955"/><rect x="918.00" y="122.87" width="4.53" height="1" fill="#d4d4d4"/><rect x="923.28" y="122.87" width="0.76" height="1" fill="#d4d4d4"/><rect x="924.79" y="122.87" width="15.86" height="1" fill="#d4d4d4"/><rect x="918.00" y="125.84" width="0.76" height="1" fill="#6a9955"/><rect x="919.51" y="125.84" width="2.27" height="1" fill="#6a9955"/><rect x="922.53" y="125.84" width="6.04" height="1" fill="#6a9955"/><rect x="929.33" y="125.84" width="4.53" height="1" fill="#6a9955"/><rect x="934.61" y="125.84" width="2.27" height="1" fill="#6a9955"/><rect x="937.63" y="125.84" width="1.51" height="1" fill="#6a9955"/><rect x="939.89" y="125.84" width="7.55" height="1" fill="#6a9955"/><rect x="948.20" y="125.84" width="3.77" height="1" fill="#6a9955"/><rect x="952.73" y="125.84" width="2.27" height="1" fill="#6a9955"/><rect x="955.75" y="125.84" width="9.81" height="1" fill="#6a9955"/><rect x="966.32" y="125.84" width="5.29" height="1" fill="#6a9955"/><rect x="918.00" y="127.33" width="15.10" height="1" fill="#d4d4d4"/><rect x="918.00" y="130.30" width="0.76" height="1" fill="#6a9955"/><rect x="919.51" y="130.30" width="5.29" height="1" fill="#6a9955"/><rect x="925.55" y="130.30" width="0.76" height="1" fill="#6a9955"/><rect x="927.06" y="130.30" width="6.79" height="1" fill="#6a9955"/><rect x="934.61" y="130.30" width="3.02" height="1" fill="#6a9955"/><rect x="938.38" y="130.30" width="3.77" height="1" fill="#6a9955"/><rect x="942.91" y="130.30" width="2.27" height="1" fill="#6a9955"/><rect x="945.93" y="130.30" width="7.55" height="1" fill="#6a9955"/><rect x="918.00" y="131.78" width="23.41" height="1" fill="#d4d4d4"/><rect x="941.40" y="131.78" width="6.04" height="1" fill="#ce9178"/><rect x="947.45" y="131.78" width="0.76" height="1" fill="#d4d4d4"/><rect x="918.00" y="134.75" width="0.76" height="1" fill="#6a9955"/><rect x="919.51" y="134.75" width="2.27" height="1" fill="#6a9955"/><rect x="922.53" y="134.75" width="7.55" height="1" fill="#6a9955"/><rect x="930.84" y="134.75" width="2.27" height="1" fill="#6a9955"/><rect x="933.86" y="134.75" width="1.51" height="1" fill="#6a9955"/><rect x="936.12" y="134.75" width="2.27" height="1" fill="#6a9955"/><rect x="939.14" y="134.75" width="1.51" height="1" fill="#6a9955"/><rect x="941.40" y="134.75" width="3.77" height="1" fill="#6a9955"/><rect x="945.93" y="134.75" width="2.27" height="1" fill="#6a9955"/><rect x="948.96" y="134.75" width="2.27" height="1" fill="#6a9955"/><rect x="951.98" y="134.75" width="5.29" height="1" fill="#6a9955"/><rect x="958.01" y="134.75" width="6.04" height="1" fill="#6a9955"/><rect x="964.81" y="134.75" width="1.51" height="1" fill="#6a9955"/><rect x="967.08" y="134.75" width="5.29" height="1" fill="#6a9955"/><rect x="918.00" y="136.24" width="6.79" height="1" fill="#d4d4d4"/><rect x="925.55" y="136.24" width="0.76" height="1" fill="#d4d4d4"/><rect x="927.06" y="136.24" width="7.55" height="1" fill="#d4d4d4"/><rect x="934.61" y="136.24" width="5.29" height="1" fill="#ce9178"/><rect x="940.65" y="136.24" width="3.02" height="1" fill="#ce9178"/><rect x="944.42" y="136.24" width="3.02" height="1" fill="#ce9178"/><rect x="948.20" y="136.24" width="4.53" height="1" fill="#ce9178"/><rect x="953.49" y="136.24" width="3.77" height="1" fill="#ce9178"/><rect x="958.01" y="136.24" width="2.27" height="1" fill="#ce9178"/><rect x="961.03" y="136.24" width="1.51" height="1" fill="#ce9178"/><rect x="963.30" y="136.24" width="1.51" height="1" fill="#ce9178"/><rect x="965.57" y="136.24" width="2.27" height="1" fill="#ce9178"/><rect x="968.59" y="136.24" width="2.27" height="1" fill="#ce9178"/><rect x="971.61" y="136.24" width="1.51" height="1" fill="#ce9178"/><rect x="973.87" y="136.24" width="2.27" height="1" fill="#ce9178"/><rect x="976.13" y="136.24" width="0.76" height="1" fill="#d4d4d4"/><rect x="918.00" y="139.20" width="2.27" height="1" fill="#569cd6"/><rect x="921.02" y="139.20" width="3.02" height="1" fill="#d4d4d4"/><rect x="924.79" y="139.20" width="1.51" height="1" fill="#569cd6"/><rect x="927.06" y="139.20" width="15.10" height="1" fill="#d4d4d4"/><rect x="921.02" y="140.69" width="10.57" height="1" fill="#d4d4d4"/><rect x="918.00" y="143.66" width="9.06" height="1" fill="#d4d4d4"/></g></svg>
<div class="a" style="left:988px;top:60px;width:1px;height:283px;background:#2c2c2c"></div>
<div class="a" style="left:988px;top:60px;width:10px;height:1px;background:#2c2c2c"></div>
<div class="a" style="left:995px;top:182px;width:3.5px;height:4.5px;background:#e51a1a"></div>
<div class="a" style="left:0;top:1px;width:999px;height:1px;background:#6e6e6e"></div>
<div class="a" style="left:0;top:0;width:1px;height:633px;background:#464646"></div>
<div class="a" style="left:1px;top:17px;width:1px;height:617px;background:#2f2f2f"></div>
<div class="a" style="left:997px;top:1px;width:2px;height:649px;background:#292929"></div>
<div class="a" style="left:997px;top:1px;width:1px;height:16px;background:#5e5e5e"></div>
<div class="a" style="left:996.5px;top:17px;width:0.6px;height:617px;background:#181818"></div>
<div class="a" style="left:1px;top:632.5px;width:996px;height:1px;background:#181818"></div>
<div class="a" style="left:0;top:20.7px;width:2px;height:30px;background:#ffffff"></div>
</body></html>
